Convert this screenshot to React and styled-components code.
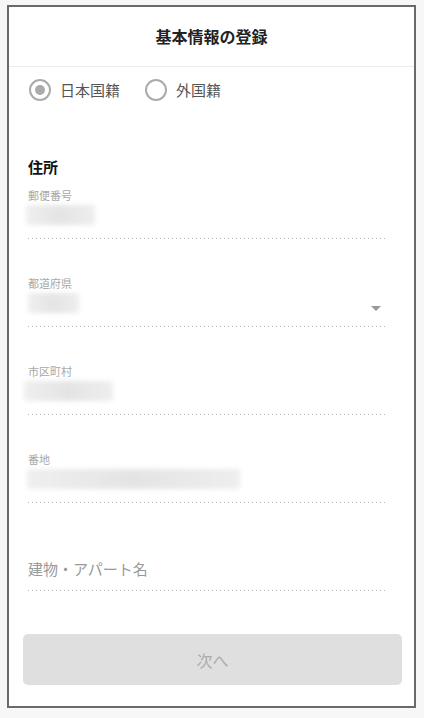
import React from "react";
import styled, { createGlobalStyle } from "styled-components";

const Global = createGlobalStyle`
  html, body { margin: 0; padding: 0; background: #f7f7f7; }
  body { font-family: "Noto Sans CJK JP", "Noto Sans", sans-serif; }
  * { box-sizing: border-box; }
`;

const Frame = styled.div`
  margin: 5px 0 0 7px;
  width: 409px;
  height: 703px;
  border: 2px solid #6a6a6a;
  background: #fff;
  display: flex;
  flex-direction: column;
`;

const Header = styled.header`
  height: 60px;
  border-bottom: 1px solid #ececec;
  display: flex;
  align-items: center;
  justify-content: center;
  padding-bottom: 2px;
`;

const Title = styled.h1`
  margin: 0;
  font-size: 16px;
  font-weight: 700;
  color: #222;
`;

const RadioRow = styled.div`
  height: 46px;
  display: flex;
  align-items: center;
  padding-left: 20px;
`;

const RadioLabel = styled.label`
  display: flex;
  align-items: center;
  gap: 9px;
  margin-right: 25px;
  font-size: 15px;
  color: #555;
  line-height: 22px;
`;

const Circle = styled.span`
  width: 22px;
  height: 22px;
  border-radius: 50%;
  border: 2px solid #ababab;
  display: flex;
  align-items: center;
  justify-content: center;
  &::after {
    content: "";
    width: 10px;
    height: 10px;
    border-radius: 50%;
    background: ${(p) => (p.$checked ? "#ababab" : "transparent")};
  }
`;

const Body = styled.div`
  padding: 0 27px 0 19px;
  display: flex;
  flex-direction: column;
`;

const SectionTitle = styled.h2`
  margin: 44px 0 11px;
  font-size: 15px;
  line-height: 20px;
  font-weight: 700;
  color: #111;
`;

const Field = styled.div`
  display: flex;
  flex-direction: column;
  margin-bottom: ${(p) => p.$gap}px;
`;

const Label = styled.div`
  font-size: 11px;
  line-height: 14px;
  color: #a8a8a8;
`;

const Value = styled.div`
  height: 36px;
  display: flex;
  align-items: flex-start;
  justify-content: space-between;
  padding-top: 3px;
`;

const Blur = styled.div`
  height: 20px;
  margin-left: ${(p) => p.$offset || 0}px;
  background: linear-gradient(90deg, #efefef, #e4e4e4 50%, #eeeeee);
  filter: blur(2.5px);
  border-radius: 2px;
`;

const Caret = styled.span`
  margin: 13px 6px 0 0;
  width: 0;
  height: 0;
  border-left: 5px solid transparent;
  border-right: 5px solid transparent;
  border-top: 5px solid #9a9a9a;
`;

const Dots = styled.div`
  height: 1px;
  background-image: repeating-linear-gradient(
    90deg,
    #b5b5b5 0 1.5px,
    transparent 1.5px 4px
  );
`;

const Placeholder = styled.div`
  font-size: 15px;
  line-height: 22px;
  color: #999;
  padding-bottom: 10px;
`;

const Button = styled.button`
  margin: 43px 12px 0 14px;
  height: 51px;
  border: none;
  border-radius: 5px;
  background: #dfdfdf;
  color: #acacac;
  font-family: inherit;
  font-size: 16px;
`;

const fields = [
  { label: "郵便番号", w: 69, off: -2 },
  { label: "都道府県", w: 51, off: 0, select: true },
  { label: "市区町村", w: 89, off: -4 },
  { label: "番地", w: 213, off: -1 },
];

export default function App() {
  return (
    <>
      <Global />
      <Frame>
        <Header>
          <Title>基本情報の登録</Title>
        </Header>
        <RadioRow>
          <RadioLabel>
            <Circle $checked />
            日本国籍
          </RadioLabel>
          <RadioLabel>
            <Circle />
            外国籍
          </RadioLabel>
        </RadioRow>
        <Body>
          <SectionTitle>住所</SectionTitle>
          {fields.map((f, i) => (
            <Field key={f.label} $gap={i === fields.length - 1 ? 55 : 37}>
              <Label>{f.label}</Label>
              <Value>
                <Blur $offset={f.off} style={{ width: f.w }} />
                {f.select && <Caret />}
              </Value>
              <Dots />
            </Field>
          ))}
          <Field $gap={0}>
            <Placeholder>建物・アパート名</Placeholder>
            <Dots />
          </Field>
        </Body>
        <Button disabled>次へ</Button>
      </Frame>
    </>
  );
}
